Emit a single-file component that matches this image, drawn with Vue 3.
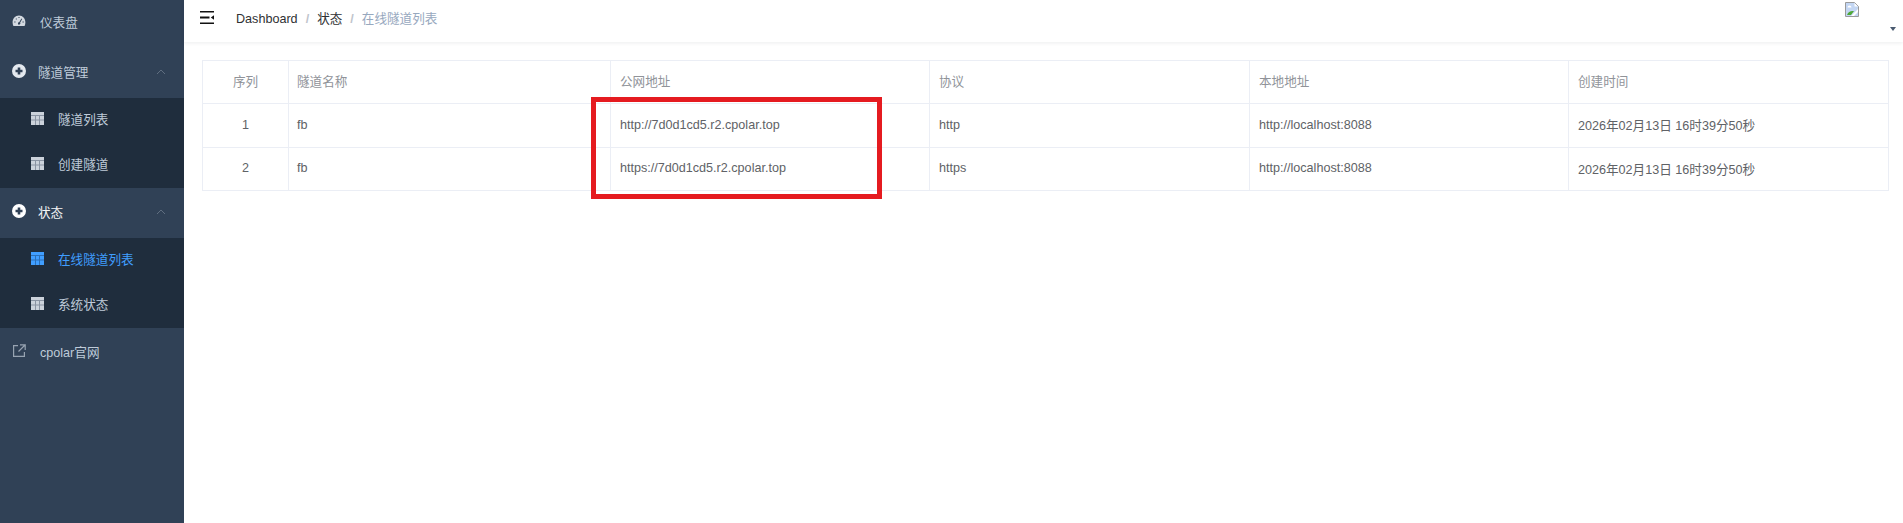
<script setup>
const rows = [
  { id: 1, name: 'fb', url: 'http://7d0d1cd5.r2.cpolar.top', proto: 'http', addr: 'http://localhost:8088', time: '2026年02月13日 16时39分50秒' },
  { id: 2, name: 'fb', url: 'https://7d0d1cd5.r2.cpolar.top', proto: 'https', addr: 'http://localhost:8088', time: '2026年02月13日 16时39分50秒' },
]
</script>

<template>
  <div class="app">
    <aside class="side">
      <div class="item first">
        <svg class="ico" viewBox="0 0 14 14"><path fill="currentColor" fill-rule="evenodd" d="M7 1.500C3.200 1.500.6 4.500.6 8.500c0 1.300.3 2.300.8 3.500h11.200c.5-1.200.8-2.200.8-3.500 0-4-2.600-7-6.400-7zM6.500 2.900h1v1.200h-1zM3.800 4.400h1v1.200h-1zM2.300 7.400h1.200v1H2.300zM10.500 7.400h1.200v1h-1.200zM9.500 4.500l.7.500-2.100 3.800a1.200 1.200 0 1 1-.9-.5z"/></svg>
        <span>仪表盘</span>
      </div>
      <div class="item head">
        <svg class="ico" viewBox="0 0 14 14"><path fill="currentColor" fill-rule="evenodd" d="M7 0a7 7 0 1 1 0 14A7 7 0 0 1 7 0zM5.700 3.500v2.200H3.500v2.600h2.200v2.200h2.600V8.300h2.200V5.700H8.300V3.500z"/></svg>
        <span class="tight">隧道管理</span>
        <svg class="chev" viewBox="0 0 10 6"><path d="M1 5l4-4 4 4" fill="none" stroke="currentColor"/></svg>
      </div>
      <div class="sub">
        <div class="subitem">
          <svg class="grid" viewBox="0 0 13 13"><rect width="13" height="13" fill="currentColor"/><path d="M0 3.500h13M0 8h13M4.500 3v10M8.500 3v10" stroke="#8a94a3" fill="none"/></svg>
          <span>隧道列表</span>
        </div>
        <div class="subitem">
          <svg class="grid" viewBox="0 0 13 13"><rect width="13" height="13" fill="currentColor"/><path d="M0 3.500h13M0 8h13M4.500 3v10M8.500 3v10" stroke="#8a94a3" fill="none"/></svg>
          <span>创建隧道</span>
        </div>
      </div>
      <div class="item head open">
        <svg class="ico" viewBox="0 0 14 14"><path fill="currentColor" fill-rule="evenodd" d="M7 0a7 7 0 1 1 0 14A7 7 0 0 1 7 0zM5.700 3.500v2.200H3.500v2.600h2.200v2.200h2.600V8.300h2.200V5.700H8.300V3.500z"/></svg>
        <span class="tight">状态</span>
        <svg class="chev" viewBox="0 0 10 6"><path d="M1 5l4-4 4 4" fill="none" stroke="currentColor"/></svg>
      </div>
      <div class="sub">
        <div class="subitem active">
          <svg class="grid" viewBox="0 0 13 13"><rect width="13" height="13" fill="currentColor"/><path d="M0 3.500h13M0 8h13M4.500 3v10M8.500 3v10" stroke="#2b6fb8" fill="none"/></svg>
          <span>在线隧道列表</span>
        </div>
        <div class="subitem">
          <svg class="grid" viewBox="0 0 13 13"><rect width="13" height="13" fill="currentColor"/><path d="M0 3.500h13M0 8h13M4.500 3v10M8.500 3v10" stroke="#8a94a3" fill="none"/></svg>
          <span>系统状态</span>
        </div>
      </div>
      <div class="item link">
        <svg class="ico" viewBox="0 0 14 14"><path fill="none" stroke="currentColor" stroke-width="1.200" d="M6 1.600H1.600v10.800h10.800V8M8 .8h5.200V6M13 1L6.500 7.500"/></svg>
        <span>cpolar官网</span>
      </div>
    </aside>

    <main class="main">
      <header class="bar">
        <svg class="burger" viewBox="0 0 14 13"><path fill="#111" d="M0 0h14v1.400H0zM0 5.600h9.500v1.800H0zM0 11.600h14V13H0zM14 4.300v4.400l-3.200-2.200z"/></svg>
        <nav class="crumbs">
          <span class="c1">Dashboard</span>
          <span class="sep">/</span>
          <span class="c1">状态</span>
          <span class="sep">/</span>
          <span class="c2">在线隧道列表</span>
        </nav>
        <div class="avatar">
          <svg class="broken" viewBox="0 0 14 15">
            <path fill="#c3d6f3" stroke="#9a9a9a" d="M.5.500h9l4 4v10H.5z"/>
            <path fill="#fff" d="M9.500 1v3.500H13zM2.500 5.500a2 2 0 0 1 4 0z"/>
            <path fill="#4fa838" d="M2 13c1-3.500 4-4.500 7-4l-3 4z"/>
            <path fill="#fff" d="M6 14l7-7v3l-4 4z"/>
          </svg>
          <i class="caret"></i>
        </div>
      </header>

      <section class="content">
        <div class="tablewrap">
          <div class="row th">
            <div class="cell c0">序列</div>
            <div class="cell c1st">隧道名称</div>
            <div class="cell">公网地址</div>
            <div class="cell">协议</div>
            <div class="cell">本地地址</div>
            <div class="cell last">创建时间</div>
          </div>
          <div v-for="r in rows" :key="r.id" class="row td">
            <div class="cell c0">{{ r.id }}</div>
            <div class="cell c1st">{{ r.name }}</div>
            <div class="cell">{{ r.url }}</div>
            <div class="cell">{{ r.proto }}</div>
            <div class="cell">{{ r.addr }}</div>
            <div class="cell last">{{ r.time }}</div>
          </div>
          <div class="redbox"></div>
        </div>
      </section>
    </main>
  </div>
</template>

<style>
html, body { margin: 0; background: #fff; overflow: hidden; }
</style>

<style scoped>
.app {
  display: flex;
  width: 1903px;
  height: 523px;
  overflow: hidden;
  font-family: "Liberation Sans", "Noto Sans CJK SC", sans-serif;
  font-size: 12.6px;
}
.side {
  width: 184px;
  flex: none;
  background: #304156;
  color: #bfcbd9;
}
.item {
  height: 50px;
  display: flex;
  align-items: center;
  position: relative;
  padding-left: 12px;
  padding-bottom: 4px;
  box-sizing: border-box;
}
.first { height: 48px; padding-bottom: 6px; }
.ico { width: 14px; height: 14px; flex: none; margin-right: 14px; }
.first .ico { color: #d3d9e0; }
.head .ico { color: #e4e9ef; }
.head span.tight { margin-left: -2px; }
.open { color: #f4f4f5; }
.open .ico { color: #fff; }
.chev {
  position: absolute;
  right: 18px;
  top: 21px;
  width: 10px;
  height: 6px;
  color: #5f6e80;
}
.sub { background: #1f2d3d; }
.subitem {
  height: 45px;
  display: flex;
  align-items: center;
  padding-left: 31px;
  padding-bottom: 4px;
  box-sizing: border-box;
}
.grid { width: 13px; height: 13px; flex: none; margin-right: 14px; color: #cbd2db; }
.active { color: #409eff; }
.active .grid { color: #409eff; }
.link .ico { color: #97a3b1; }
.main { flex: 1; min-width: 0; }
.bar {
  height: 42px;
  display: flex;
  align-items: flex-start;
  position: relative;
  box-shadow: 0 1px 4px rgba(0, 21, 41, 0.08);
  box-sizing: border-box;
}
.burger { width: 14px; height: 13px; margin: 11px 0 0 16px; flex: none; }
.crumbs {
  display: flex;
  margin: 11px 0 0 22px;
  line-height: 16px;
}
.c1 { color: #303133; }
.c2 { color: #97a8be; }
.sep { color: #c0c4cc; margin: 0 8px; font-weight: 700; }
.avatar {
  position: absolute;
  right: 0;
  top: 0;
  width: 60px;
  height: 42px;
}
.broken { position: absolute; left: 2px; top: 2px; width: 14px; height: 15px; }
.caret {
  position: absolute;
  right: 7px;
  top: 27px;
  width: 0;
  height: 0;
  border-left: 3.500px solid transparent;
  border-right: 3.500px solid transparent;
  border-top: 4px solid #4a5a70;
}
.content { padding: 18px 14px 0 18px; }
.tablewrap {
  position: relative;
  border-top: 1px solid #ebeef5;
  border-left: 1px solid #ebeef5;
}
.row {
  display: grid;
  grid-template-columns: 86px 322px 319px 320px 319px 1fr;
  border-bottom: 1px solid #ebeef5;
  box-sizing: border-box;
}
.th { height: 43px; color: #909399; }
.td { height: 44px; color: #606266; }
.td + .td { height: 43px; }
.cell {
  display: flex;
  align-items: center;
  padding-left: 9px;
  padding-bottom: 2px;
  border-right: 1px solid #ebeef5;
  box-sizing: border-box;
  min-width: 0;
  white-space: nowrap;
}
.cell.c1st { padding-left: 8px; }
.th .cell { padding-bottom: 4px; }
.c0 { justify-content: center; padding-left: 0; }
.redbox {
  position: absolute;
  left: 388px;
  top: 36px;
  width: 291px;
  height: 102px;
  box-sizing: border-box;
  border: 5px solid #e51b20;
}
</style>
